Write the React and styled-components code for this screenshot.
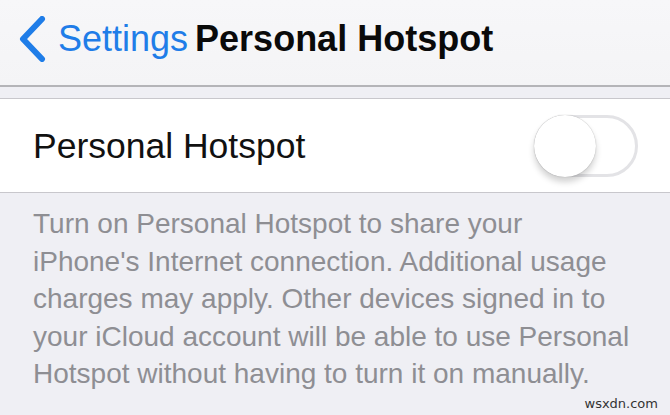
import styled, { createGlobalStyle } from "styled-components";

const GlobalStyle = createGlobalStyle`
  html, body {
    margin: 0;
    padding: 0;
    background: #efeff4;
  }
  body {
    font-family: "Liberation Sans", Arial, sans-serif;
    -webkit-font-smoothing: antialiased;
  }
`;

const Screen = styled.div`
  width: 670px;
  height: 415px;
  overflow: hidden;
  background: #efeff4;
  display: flex;
  flex-direction: column;
  position: relative;
`;

const NavBar = styled.header`
  height: 87px;
  flex: none;
  display: flex;
  align-items: center;
  padding: 0 0 8px 18px;
  box-sizing: border-box;
  background: linear-gradient(180deg, #f7f7f9 0%, #f4f4f6 100%);
  border-bottom: 2px solid #b4b4b8;
`;

const BackButton = styled.button`
  display: flex;
  align-items: center;
  gap: 12px;
  border: none;
  background: none;
  padding: 0;
  color: #1f7de8;
  font-family: inherit;
  font-size: 36px;
  cursor: pointer;
`;

const Title = styled.h1`
  margin: 0 0 0 7px;
  font-size: 36px;
  font-weight: bold;
  color: #0a0a0a;
`;

const Gap = styled.div`
  height: 12px;
  flex: none;
  box-sizing: border-box;
  border-bottom: 1px solid #c8c7cc;
`;

const Row = styled.div`
  height: 94px;
  flex: none;
  background: #ffffff;
  border-bottom: 1px solid #c8c7cc;
  display: flex;
  align-items: center;
  justify-content: space-between;
  padding: 1px 32px 0 33px;
  box-sizing: border-box;
`;

const RowLabel = styled.span`
  font-size: 35.5px;
  color: #111111;
`;

const Track = styled.div`
  width: 104px;
  height: 62px;
  box-sizing: border-box;
  border-radius: 31px;
  border: 3px solid #e3e3e6;
  background: ${(p) => (p.$on ? "#4cd964" : "#ffffff")};
  position: relative;
`;

const Knob = styled.div`
  position: absolute;
  top: -3px;
  left: ${(p) => (p.$on ? "39px" : "-3px")};
  width: 62px;
  height: 62px;
  border-radius: 50%;
  background: #ffffff;
  box-shadow: 0 5px 6px rgba(0, 0, 0, 0.18), 0 0 1px rgba(0, 0, 0, 0.35);
`;

const Footer = styled.p`
  margin: 0;
  padding: 12px 0 0 33px;
  font-size: 28px;
  line-height: 37.5px;
  color: #8e8e93;
`;

const Watermark = styled.span`
  position: absolute;
  right: 12px;
  bottom: 4px;
  font-family: "DejaVu Sans", sans-serif;
  font-size: 13px;
  color: #333333;
`;

function Chevron() {
  return (
    <svg width="28" height="46" viewBox="0 0 28 46">
      <path
        d="M24 3 L5 23 L24 43"
        fill="none"
        stroke="#1f7de8"
        strokeWidth="6"
        strokeLinecap="round"
        strokeLinejoin="round"
      />
    </svg>
  );
}

export default function App() {
  return (
    <Screen>
      <GlobalStyle />
      <NavBar>
        <BackButton>
          <Chevron />
          Settings
        </BackButton>
        <Title>Personal Hotspot</Title>
      </NavBar>
      <Gap />
      <Row>
        <RowLabel>Personal Hotspot</RowLabel>
        <Track>
          <Knob />
        </Track>
      </Row>
      <Footer>
        Turn on Personal Hotspot to share your
        <br />
        iPhone's Internet connection. Additional usage
        <br />
        charges may apply. Other devices signed in to
        <br />
        your iCloud account will be able to use Personal
        <br />
        Hotspot without having to turn it on manually.
      </Footer>
      <Watermark>wsxdn.com</Watermark>
    </Screen>
  );
}
